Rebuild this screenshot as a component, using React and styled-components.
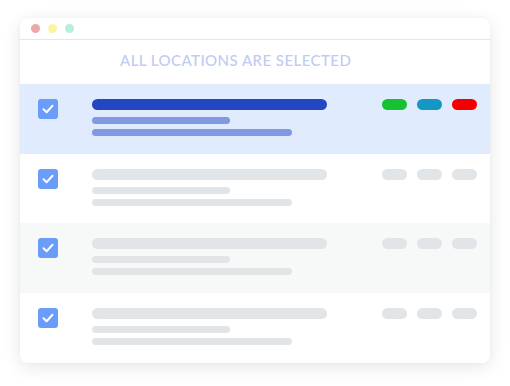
import React from "react";
import styled, { createGlobalStyle } from "styled-components";

const Global = createGlobalStyle`
  html, body { margin: 0; padding: 0; background: #ffffff; }
  body { font-family: "Lato", "Open Sans", sans-serif; }
`;

const Page = styled.div`
  width: 510px;
  height: 386px;
  padding: 18px 20px 0 20px;
  box-sizing: border-box;
`;

const Window = styled.div`
  width: 470px;
  height: 345px;
  background: #ffffff;
  border-radius: 8px;
  overflow: hidden;
  box-shadow: 0 4px 18px rgba(0, 0, 0, 0.1), 0 0 3px rgba(0, 0, 0, 0.04);
  display: flex;
  flex-direction: column;
`;

const TitleBar = styled.div`
  height: 21px;
  border-bottom: 1px solid #e4e6e8;
  display: flex;
  align-items: center;
  gap: 8px;
  padding: 0 0 0 11px;
`;

const Dot = styled.span`
  width: 9px;
  height: 9px;
  border-radius: 50%;
  background: ${(p) => p.$c};
`;

const Header = styled.div`
  height: 44px;
  box-sizing: border-box;
  padding: 0 0 3px 100px;
  display: flex;
  align-items: center;
  font-size: 15px;
  letter-spacing: 0.45px;
  color: #c0cbf2;
  font-weight: 500;
`;

const Row = styled.div`
  height: 70px;
  box-sizing: border-box;
  background: ${(p) => p.$bg};
  display: flex;
  align-items: flex-start;
  padding: 15px 13px 0 18px;
`;

const Check = styled.div`
  width: 20px;
  height: 20px;
  border-radius: 3px;
  background: #6a9cf9;
  display: flex;
  align-items: center;
  justify-content: center;
  flex: none;
`;

const Lines = styled.div`
  display: flex;
  flex-direction: column;
  margin-left: 34px;
  width: 235px;
`;

const Bar = styled.div`
  height: ${(p) => (p.$big ? 11 : 7)}px;
  width: ${(p) => p.$w}px;
  border-radius: 6px;
  background: ${(p) => p.$c};
  margin-top: ${(p) => p.$mt}px;
`;

const Pills = styled.div`
  display: flex;
  gap: 10px;
  margin-left: auto;
`;

const Pill = styled.div`
  width: 25px;
  height: 11px;
  border-radius: 6px;
  background: ${(p) => p.$c};
`;

const CheckIcon = () => (
  <svg width="14" height="14" viewBox="0 0 14 14">
    <path d="M2.5 7.3 L5.6 10.2 L11.5 3.8" fill="none" stroke="#fff" strokeWidth="2" strokeLinecap="round" strokeLinejoin="round" />
  </svg>
);

const GRAY = "#e1e5e8";

const rows = [
  { bg: "#e0ebfd", main: "#2546c1", sub: "#8099e0", pills: ["#16c134", "#1398c4", "#f50000"] },
  { bg: "#ffffff", main: GRAY, sub: GRAY, pills: [GRAY, GRAY, GRAY] },
  { bg: "#f7f9f9", main: GRAY, sub: GRAY, pills: [GRAY, GRAY, GRAY] },
  { bg: "#ffffff", main: GRAY, sub: GRAY, pills: [GRAY, GRAY, GRAY] },
];

export default function App() {
  return (
    <Page>
      <Global />
      <Window>
        <TitleBar>
          <Dot $c="#eca9a9" />
          <Dot $c="#fdf3a0" />
          <Dot $c="#b5f0dc" />
        </TitleBar>
        <Header>ALL LOCATIONS ARE SELECTED</Header>
        {rows.map((r, i) => (
          <Row key={i} $bg={r.bg}>
            <Check>
              <CheckIcon />
            </Check>
            <Lines>
              <Bar $big $w={235} $c={r.main} $mt={0} />
              <Bar $w={138} $c={r.sub} $mt={7} />
              <Bar $w={200} $c={r.sub} $mt={5} />
            </Lines>
            <Pills>
              {r.pills.map((c, j) => (
                <Pill key={j} $c={c} />
              ))}
            </Pills>
          </Row>
        ))}
      </Window>
    </Page>
  );
}
